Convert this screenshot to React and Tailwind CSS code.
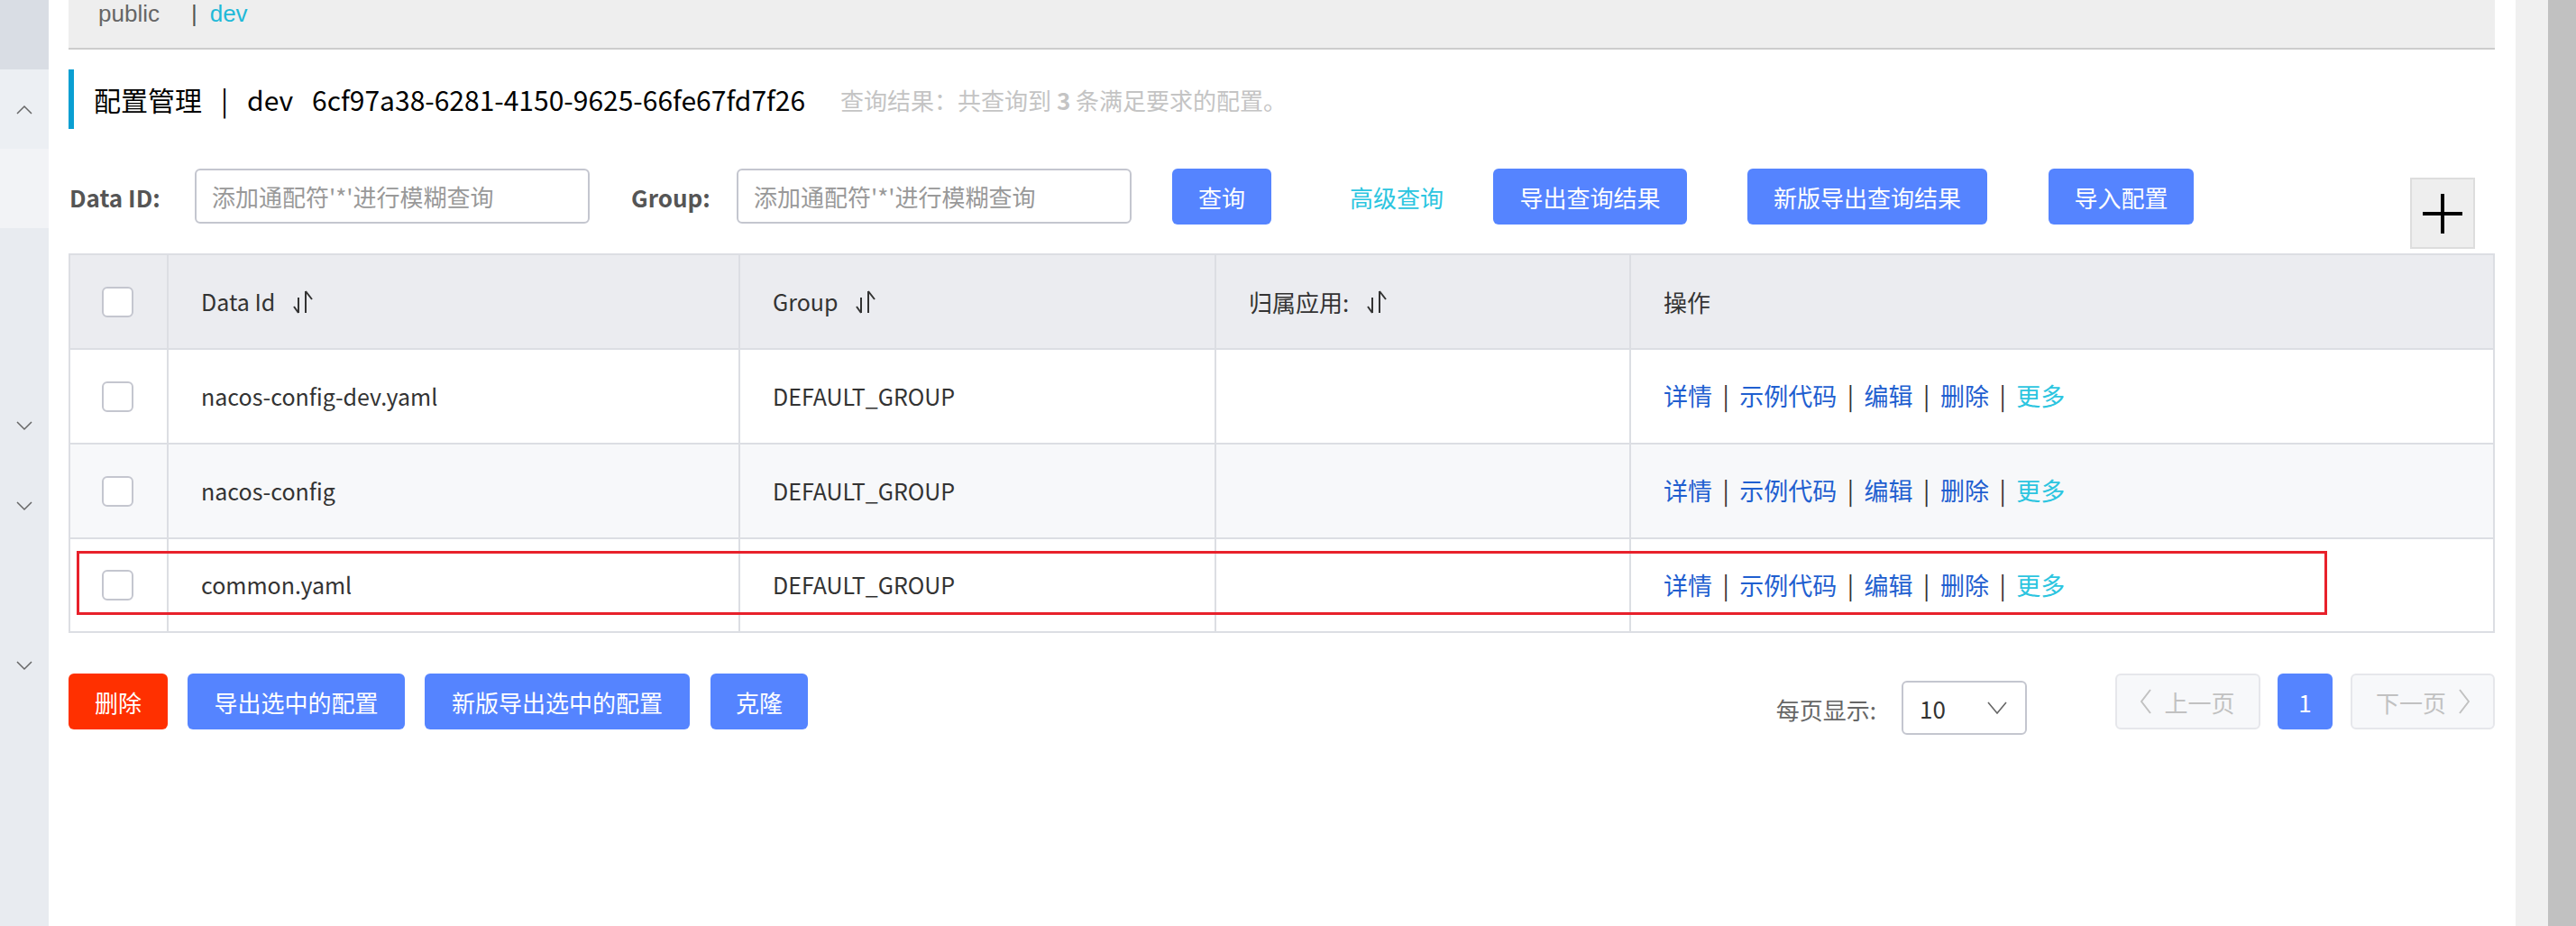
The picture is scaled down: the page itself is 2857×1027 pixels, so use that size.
import React from 'react'

const rows = [
  { id: 'nacos-config-dev.yaml', group: 'DEFAULT_GROUP', bg: 'bg-white' },
  { id: 'nacos-config', group: 'DEFAULT_GROUP', bg: 'bg-[#f7f8fa]' },
  { id: 'common.yaml', group: 'DEFAULT_GROUP', bg: 'bg-white' },
]

function SortIcon() {
  return (
    <svg width="24" height="26" viewBox="0 0 24 26" fill="none" stroke="#333" strokeWidth="2" className="ml-[20px]">
      <path d="M6 8v17M6 25L1 18" />
      <path d="M14 1v24M14 1l7 9" />
    </svg>
  )
}

function Chevron({ up }) {
  return (
    <svg width="18" height="11" viewBox="0 0 18 11" fill="none" stroke="#666" strokeWidth="1.5">
      <path d={up ? 'M1 10L9 2l8 8' : 'M1 1l8 8 8-8'} />
    </svg>
  )
}

function Checkbox() {
  return <div className="h-[34px] w-[35px] rounded-[6px] border-2 border-[#c4c6cf] bg-white" />
}

function Btn({ children, className = '' }) {
  return (
    <button className={`flex h-[62px] shrink-0 items-center justify-center rounded-[6px] bg-[#5584ff] text-[26px] text-white ${className}`}>
      {children}
    </button>
  )
}

function Actions() {
  const sep = <span className="mx-[11.5px] text-[#333]">|</span>
  return (
    <div className="flex items-center text-[27px] text-[#1f5fd0]">
      <span>详情</span>{sep}<span>示例代码</span>{sep}<span>编辑</span>{sep}<span>删除</span>{sep}
      <span className="text-[#2cc5e0]">更多</span>
    </div>
  )
}

export default function App() {
  const cell = 'flex items-center pl-[36px] border-r-2 border-[#dcdee3]'
  return (
    <div className="flex h-[1027px] w-[2857px] overflow-hidden bg-white font-['Noto_Sans_CJK_SC','Noto_Sans',sans-serif] text-[#333]">
      {/* left nav */}
      <aside className="flex w-[54px] shrink-0 flex-col">
        <div className="h-[77px] bg-[#d9dde4]" />
        <div className="flex h-[88px] items-center justify-center bg-[#eceff3]">
          <Chevron up />
        </div>
        <div className="h-[88px] bg-[#f2f3f6]" />
        <div className="flex flex-1 flex-col items-center bg-[#e8ebf0] pt-[214px]">
          <Chevron />
          <div className="mt-[78px]"><Chevron /></div>
          <div className="mt-[166px]"><Chevron /></div>
        </div>
      </aside>

      <main className="w-[2736px] shrink-0 pl-[22px] pr-[23px]">
        {/* namespace bar */}
        <div className="h-[55px] border-b-2 border-[#cccccc] bg-[#eeeeee]">
          <div className="flex h-[30px] items-center pl-[33px] font-['Liberation_Sans',sans-serif] text-[26px] leading-none">
            <span className="text-[#666]">public</span>
            <span className="ml-[35px] text-[#555]">|</span>
            <span className="ml-[14px] text-[#1fb9d8]">dev</span>
          </div>
        </div>

        {/* title */}
        <div className="mt-[22px] flex h-[66px] items-center border-l-[6px] border-[#0a9fd2] pl-[22px]">
          <span className="text-[30px] text-black">配置管理</span>
          <span className="mx-[21px] text-[30px] text-black">|</span>
          <span className="text-[30px] text-black">dev</span>
          <span className="ml-[21px] text-[30px] text-black">6cf97a38-6281-4150-9625-66fe67fd7f26</span>
          <span className="ml-[39px] text-[26px] text-[#c4c4c4]">
            查询结果：共查询到 <b>3</b> 条满足要求的配置。
          </span>
        </div>

        {/* search row */}
        <div className="mt-[44px] flex items-start text-[26px]">
          <label className="flex h-[62px] w-[112px] shrink-0 items-center pl-px font-bold text-[#555]">Data ID:</label>
          <input
            placeholder="添加通配符'*'进行模糊查询"
            className="ml-[28px] h-[61px] w-[438px] rounded-[6px] border-2 border-[#c4c6cf] px-[17px] outline-none placeholder:text-[#999]"
          />
          <label className="ml-[46px] flex h-[62px] w-[89px] shrink-0 items-center font-bold text-[#555]">Group:</label>
          <input
            placeholder="添加通配符'*'进行模糊查询"
            className="ml-[28px] h-[61px] w-[438px] rounded-[6px] border-2 border-[#c4c6cf] px-[17px] outline-none placeholder:text-[#999]"
          />
          <Btn className="ml-[45px] w-[110px]">查询</Btn>
          <span className="ml-[87px] flex h-[62px] items-center text-[#2cc5e0]">高级查询</span>
          <Btn className="ml-[55px] w-[215px]">导出查询结果</Btn>
          <Btn className="ml-[67px] w-[266px]">新版导出查询结果</Btn>
          <Btn className="ml-[68px] w-[161px]">导入配置</Btn>
          <div className="ml-auto mr-[22px] mt-[10px] flex h-[79px] w-[72px] items-center justify-center border-2 border-[#dddddd] bg-[#eeeeee]">
            <svg width="44" height="44" viewBox="0 0 44 44" stroke="#000" strokeWidth="4">
              <path d="M22 0v44M0 22h44" />
            </svg>
          </div>
        </div>

        {/* table */}
        <div className="relative mt-[5px] border-2 border-[#dcdee3] text-[25px]">
          <div className="grid h-[105px] grid-cols-[109px_634px_528px_460px_1fr] border-b-2 border-[#dcdee3] bg-[#ebecf0]">
            <div className="flex items-center border-r-2 border-[#dcdee3] pl-[35px]"><Checkbox /></div>
            <div className={cell}>Data Id<SortIcon /></div>
            <div className={cell}>Group<SortIcon /></div>
            <div className={`${cell} text-[26px]`}>归属应用:<SortIcon /></div>
            <div className="flex items-center pl-[36px] text-[26px]">操作</div>
          </div>
          {rows.map((r, i) => (
            <div
              key={r.id}
              className={`grid grid-cols-[109px_634px_528px_460px_1fr] ${r.bg} ${i < rows.length - 1 ? 'h-[105px] border-b-2 border-[#dcdee3]' : 'h-[102px]'}`}
            >
              <div className="flex items-center border-r-2 border-[#dcdee3] pl-[35px]"><Checkbox /></div>
              <div className={cell}>{r.id}</div>
              <div className={cell}>{r.group}</div>
              <div className={cell} />
              <div className="flex items-center pl-[36px]"><Actions /></div>
            </div>
          ))}
          {/* annotation box */}
          <div className="absolute left-[7px] top-[328px] h-[71px] w-[2496px] border-[3px] border-[#e8212b]" />
        </div>

        {/* bottom bar */}
        <div className="mt-[45px] flex items-start text-[26px]">
          <Btn className="w-[110px] bg-[#ff3000]">删除</Btn>
          <Btn className="ml-[22px] w-[241px]">导出选中的配置</Btn>
          <Btn className="ml-[22px] w-[294px]">新版导出选中的配置</Btn>
          <Btn className="ml-[23px] w-[108px]">克隆</Btn>

          <span className="ml-auto flex h-[78px] items-center text-[#666]">每页显示:</span>
          <div className="ml-[28px] mt-[8px] flex h-[60px] w-[139px] items-center justify-between rounded-[6px] border-2 border-[#c4c6cf] pl-[18px] pr-[20px] text-[#333]">
            <span>10</span>
            <svg width="22" height="14" viewBox="0 0 22 14" fill="none" stroke="#666" strokeWidth="1.6">
              <path d="M1 1l10 12L21 1" />
            </svg>
          </div>
          <div className="ml-[98px] flex h-[62px] w-[161px] items-center justify-center gap-[14px] rounded-[6px] border-2 border-[#e6e7eb] bg-[#f7f8fa] text-[#c1c1c1]">
            <svg width="12" height="28" viewBox="0 0 12 28" fill="none" stroke="#c1c1c1" strokeWidth="2">
              <path d="M11 1L1 14l10 13" />
            </svg>
            <span>上一页</span>
          </div>
          <Btn className="ml-[19px] w-[61px]">1</Btn>
          <div className="ml-[20px] flex h-[62px] w-[160px] items-center justify-center gap-[14px] rounded-[6px] border-2 border-[#e6e7eb] bg-[#f7f8fa] text-[#c1c1c1]">
            <span>下一页</span>
            <svg width="12" height="28" viewBox="0 0 12 28" fill="none" stroke="#c1c1c1" strokeWidth="2">
              <path d="M1 1l10 13L1 27" />
            </svg>
          </div>
        </div>
      </main>

      <div className="w-[36px] shrink-0 bg-[#f0f0f0]" />
      <div className="w-[31px] shrink-0 bg-[#c1c1c1]" />
    </div>
  )
}
